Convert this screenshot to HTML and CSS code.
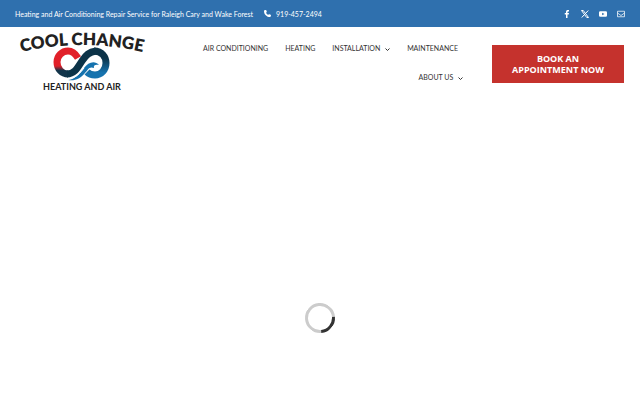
FILE: index.html
```
<!DOCTYPE html>
<html lang="en">
<head>
    <meta charset="UTF-8">
    <meta name="viewport" content="width=device-width, initial-scale=1">
    <title>Cool Change Heating and Air</title>
    <link rel="stylesheet" href="styles.css">
</head>
<body>
<div class="top-bar">
    <div class="contact-info">
        <span>Heating and Air Conditioning Repair Service for Raleigh Cary and Wake Forest</span>
        <a class="phone" href="tel:919-457-2494">
            <svg class="phone-icon" viewBox="0 0 512 512" aria-hidden="true"><path fill="currentColor" d="M165 25c-8-19-29-29-48-23L29 26C12 31 0 46 0 64c0 247 201 448 448 448 18 0 33-12 38-29l24-88c6-19-4-40-23-48l-96-40c-16-7-35-2-46 12l-40 49c-70-33-127-90-160-160l49-40c14-11 19-30 12-46z"/></svg>
            <span>919-457-2494</span>
        </a>
    </div>
    <div class="social">
        <a href="#" aria-label="Facebook"><svg viewBox="0 0 16 16"><path fill="currentColor" d="M6 16V9H3.500V6H6V4c0-2.700 1.500-4 4-4 1 0 2 .2 2 .2V3h-1.400C9.400 3 9 3.700 9 4.400V6h3l-.5 3H9v7z"/></svg></a>
        <a href="#" aria-label="X"><svg viewBox="0 0 16 16"><path fill="none" stroke="currentColor" stroke-width="2" d="M1 1h3.500L15 15h-3.500zM14.500 1 9 7M7 9l-5.500 6"/></svg></a>
        <a href="#" aria-label="YouTube"><svg viewBox="0 0 16 16"><path fill="currentColor" fill-rule="evenodd" d="M2.500 2.500h11Q16 2.500 16 5v6q0 2.500-2.500 2.500h-11Q0 13.500 0 11V5q0-2.500 2.500-2.500zM6.300 5.300v5.400L11 8z"/></svg></a>
        <a href="#" aria-label="Email"><svg viewBox="0 0 16 16"><path fill="none" stroke="currentColor" stroke-width="1.500" d="M1 2.500h14v11H1zM1 6l7 5 7-5"/></svg></a>
    </div>
</div>

<header class="header">
    <a class="logo" href="#">
        <svg viewBox="0 0 132 60" role="img" aria-label="Cool Change Heating and Air">
            <defs>
                <path id="arch" d="M1 22Q66 6 131 22"/>
                <linearGradient id="red-navy" x1="0" y1="0" x2="0" y2="1">
                    <stop offset=".65" stop-color="#e12029"/>
                    <stop offset=".85" stop-color="#12344a"/>
                </linearGradient>
                <linearGradient id="navy-blue" x1="0" y1="0" x2="0" y2="1">
                    <stop offset=".3" stop-color="#0c3348"/>
                    <stop offset=".9" stop-color="#1673ae"/>
                </linearGradient>
            </defs>
            <text class="logo-name" text-anchor="middle"><textPath href="#arch" startOffset="50%">COOL CHANGE</textPath></text>
            <!-- left loop -->
            <path fill="none" stroke="url(#red-navy)" stroke-width="7" d="M62 27C59 22 56 20 52 20C46 20 41 25 41 31C41 38 46 43 52 43"/>
            <!-- diagonal -->
            <path fill="none" stroke="#0c3348" stroke-width="7" d="M51 43C59 43 62 36 66 30C70 24 73 21 80 20"/>
            <!-- right loop -->
            <path fill="none" stroke="url(#navy-blue)" stroke-width="7" d="M78 20C86 20 90 26 90 32C90 39 85 44 79 44C76 44 73 43 71 41"/>
            <!-- wave -->
            <path fill="#1673ae" d="M52 49C60 48 64 42 68 37C72 31 79 29 83 34C80 33 77 34 78 37C73 35 72 39 69 42C64 48 59 50 52 49z"/>
            <path fill="none" stroke="#fff" stroke-width="1" d="M50 48C60 48 64 42 68 37"/>
            <text class="logo-tag" x="66" y="59" text-anchor="middle">HEATING AND AIR</text>
        </svg>
    </a>
    <nav class="menu">
        <a href="#">AIR CONDITIONING</a>
        <a href="#">HEATING</a>
        <a href="#">INSTALLATION <svg class="caret" viewBox="0 0 10 6"><path d="M1 1l4 4 4-4"/></svg></a>
        <a href="#">MAINTENANCE</a>
        <a class="last" href="#">ABOUT US <svg class="caret" viewBox="0 0 10 6"><path d="M1 1l4 4 4-4"/></svg></a>
    </nav>
    <a class="book-btn" href="#">BOOK AN<br>APPOINTMENT NOW</a>
</header>

<main class="content">
    <div class="spinner" role="status" aria-label="Loading"></div>
</main>
</body>
</html>
```
FILE: styles.css
```
* {
    box-sizing: border-box;
}

body {
    margin: 0;
    min-height: 100vh;
    display: flex;
    flex-direction: column;
    background: #fff;
    color: #333;
    font-family: Lato, "Open Sans", sans-serif;
}

a {
    color: inherit;
    text-decoration: none;
}

.top-bar {
    display: flex;
    justify-content: space-between;
    align-items: center;
    height: 27px;
    padding: 0 15px;
    background: #2f70ae;
    color: #fff;
    font-size: 7px;
}

.contact-info,
.phone,
.social {
    display: flex;
    align-items: center;
}

.contact-info {
    gap: 11px;
}

.phone {
    gap: 5px;
}

.phone-icon {
    width: 7px;
    height: 7px;
}

.social {
    gap: 10px;
}

.social svg {
    display: block;
    width: 8px;
    height: 8px;
}

.header {
    display: flex;
    align-items: flex-start;
    padding: 4px 16px;
}

.logo {
    flex: none;
    width: 132px;
}

.logo svg {
    display: block;
    width: 100%;
    overflow: visible;
}

.logo-name {
    fill: #222;
    font-size: 17px;
    font-weight: 800;
}

.logo-tag {
    fill: #222;
    font-size: 9px;
    font-weight: 700;
}

.menu {
    flex: 1;
    display: flex;
    flex-wrap: wrap;
    justify-content: flex-end;
    column-gap: 17px;
    padding: 3px 34px 0 30px;
    font-size: 7px;
    line-height: 29px;
}

.menu a {
    white-space: nowrap;
}

/* the caret hangs past the right edge of the first row */
.menu .last {
    margin-right: -5px;
    margin-left: 5px;
}

.caret {
    width: 5px;
    height: 3px;
    margin-left: 3px;
    fill: none;
    stroke: currentColor;
    stroke-width: 2;
}

.book-btn {
    flex: none;
    width: 132px;
    margin-top: 14px;
    padding: 8px 0;
    background: #c5322d;
    color: #fff;
    font: 700 9px/11px "Open Sans", sans-serif;
    text-align: center;
}

.content {
    flex: 1;
    display: flex;
    justify-content: center;
    align-items: flex-end;
    padding-bottom: 67px;
}

.spinner {
    width: 30px;
    height: 30px;
    border: 3px solid #ccc;
    border-right-color: #333;
    border-radius: 50%;
    transform: rotate(40deg);
}
```
